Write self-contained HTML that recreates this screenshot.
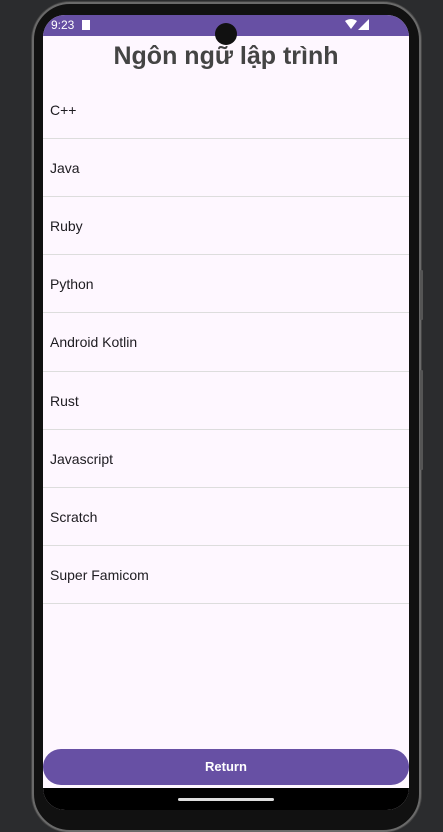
<!DOCTYPE html>
<html><head><meta charset="utf-8"><style>
*{margin:0;padding:0;box-sizing:border-box}
body{width:443px;height:826px;background:#2b2c2e;position:relative;overflow:hidden;font-family:"Liberation Sans",sans-serif}
.phone{position:absolute;left:32px;top:2px;width:389px;height:830px;border-radius:38px;background:#111;border:2px solid #6a6a6a;box-shadow:0 0 0 1px #444}
.side{position:absolute;left:420px;width:3px;background:#555;border-radius:1px}
.screen{position:absolute;left:43px;top:15px;width:366px;height:795px;border-radius:22px;overflow:hidden;background:#fef7ff}
.status{height:21px;background:#6750a4;color:#fff;font-size:12px;padding:3px 0 0 8px;position:relative}
.cam{position:absolute;left:172px;top:8px;width:22px;height:22px;border-radius:50%;background:#111}
h1{text-align:center;font-size:25px;font-weight:bold;color:#444;margin-top:4px;height:41px;line-height:32px}
.row{height:58px;border-bottom:1px solid #ddd;font-size:14px;color:#1d1b20;padding-left:7px;line-height:58px}
.btn{position:absolute;left:0;top:734px;width:366px;height:36px;border-radius:18px;background:#6750a4;color:#fff;font-size:13px;font-weight:bold;text-align:center;line-height:36px}
.nav{position:absolute;left:0;top:773px;width:366px;height:22px;background:#000}
.bar{position:absolute;left:135px;top:10px;width:96px;height:3px;border-radius:2px;background:#ddd}
</style></head><body>
<div class="phone"></div>
<div class="side" style="top:270px;height:50px"></div>
<div class="side" style="top:370px;height:100px"></div>
<div class="screen">
<div class="status">9:23 <span style="display:inline-block;width:8px;height:10px;background:#fff;margin-left:4px;vertical-align:-1px"></span>
<svg style="position:absolute;right:38px;top:4px" width="26" height="12"><path d="M0 2 Q6 -2 12 2 L6 10Z" fill="#fff"/><path d="M24 0 L24 11 L13 11Z" fill="#fff"/></svg></div>
<div class="cam"></div>
<h1>Ngôn ngữ lập trình</h1>
<div class="row">C++</div><div class="row">Java</div><div class="row">Ruby</div><div class="row">Python</div><div class="row" style="height:59px">Android Kotlin</div><div class="row">Rust</div><div class="row">Javascript</div><div class="row">Scratch</div><div class="row">Super Famicom</div>
<div class="btn">Return</div>
<div class="nav"><div class="bar"></div></div>
</div>
</body></html>
